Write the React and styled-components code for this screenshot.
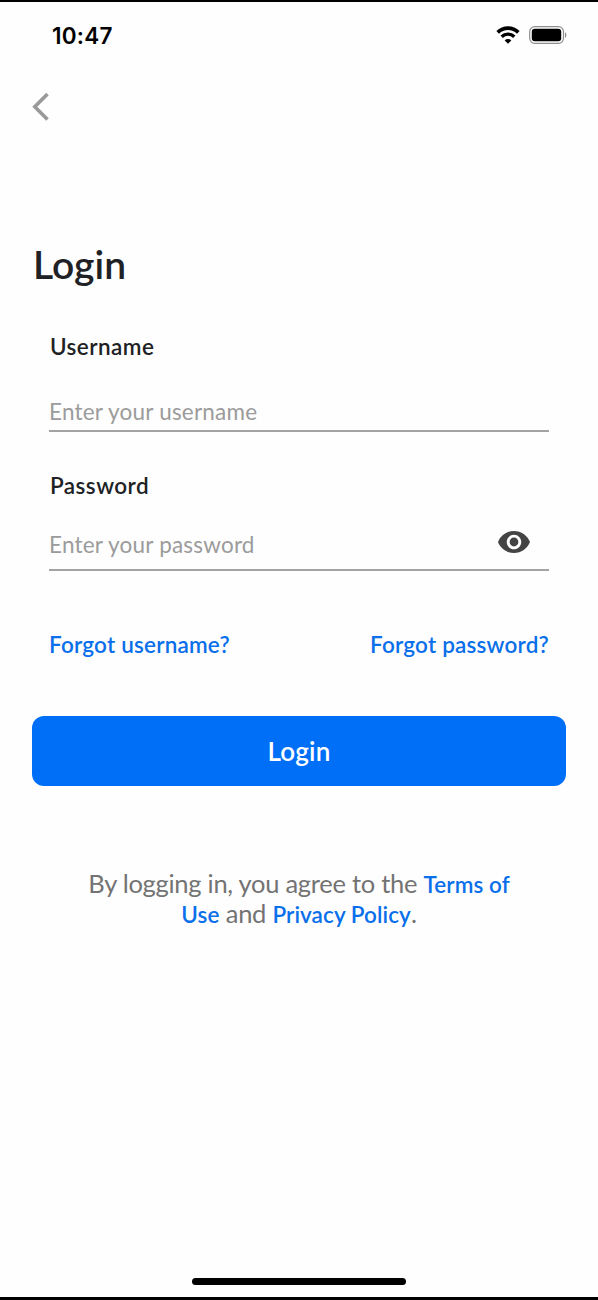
import React, { useState } from 'react';
import styled, { createGlobalStyle } from 'styled-components';

const palette = {
  primary: '#006ff8',
  link: '#0a6fea',
  text: '#202124',
  muted: '#737373',
  placeholder: '#9b9b9b',
  line: '#a3a3a3',
};

export default function App() {
  const [username, setUsername] = useState('');
  const [password, setPassword] = useState('');
  const [isVisible, setIsVisible] = useState(false);

  return (
    <>
      <GlobalStyle />
      <Screen>
        <StatusBar>
          <Time>10:47</Time>
          <StatusIcons>
            <WifiIcon />
            <BatteryIcon />
          </StatusIcons>
        </StatusBar>
        <BackButton aria-label="Back">
          <BackIcon />
        </BackButton>
        <Title>Login</Title>
        <Form>
          <Label htmlFor="username">Username</Label>
          <UsernameField>
            <Input
              id="username"
              placeholder="Enter your username"
              value={username}
              onChange={(e) => setUsername(e.target.value)}
            />
          </UsernameField>
          <Label htmlFor="password">Password</Label>
          <PasswordField>
            <Input
              id="password"
              type={isVisible ? 'text' : 'password'}
              placeholder="Enter your password"
              value={password}
              onChange={(e) => setPassword(e.target.value)}
            />
            <EyeButton
              type="button"
              aria-label="Show password"
              onClick={() => setIsVisible(!isVisible)}
            >
              <EyeIcon />
            </EyeButton>
          </PasswordField>
          <ForgotRow>
            <ForgotLink>Forgot username?</ForgotLink>
            <ForgotLink>Forgot password?</ForgotLink>
          </ForgotRow>
        </Form>
        <LoginButton>Login</LoginButton>
        <Terms>
          By logging in, you agree to the <TermsLink>Terms of</TermsLink>
          <br />
          <TermsLink>Use</TermsLink> and <TermsLink>Privacy Policy</TermsLink>.
        </Terms>
        <HomeIndicator />
      </Screen>
    </>
  );
}

function WifiIcon() {
  return (
    <svg width="24" height="18" viewBox="0 0 24 18" fill="none" stroke="#000">
      <path d="M1.7 6.300a14.800 14.800 0 0 1 20.600 0" strokeWidth="3.800" />
      <path d="M5.700 10.700a9 9 0 0 1 12.600 0" strokeWidth="3.400" />
      <path d="M12 17.700l-3.300-3.300a4.700 4.700 0 0 1 6.600 0z" fill="#000" stroke="none" />
    </svg>
  );
}

function BatteryIcon() {
  return (
    <svg width="39" height="18" viewBox="0 0 39 18" fill="none">
      <rect x="0.7" y="0.7" width="33.8" height="16.6" rx="5" stroke="#8e8e8e" strokeWidth="1.2" />
      <rect x="2.8" y="2.8" width="29.4" height="12.4" rx="3" fill="#000" />
      <path d="M36 6.2c1.800.6 1.800 5 0 5.600z" fill="#8e8e8e" />
    </svg>
  );
}

function BackIcon() {
  return (
    <svg width="18" height="30" viewBox="0 0 18 30" fill="none">
      <path d="M15.500 2L2.800 14.800L15.500 27.600" stroke="#999" strokeWidth="3.600" />
    </svg>
  );
}

function EyeIcon() {
  return (
    <svg width="32" height="22" viewBox="1 4.500 22 15" preserveAspectRatio="none" fill="#444">
      <path d="M12 4.500C7 4.500 2.730 7.610 1 12c1.730 4.390 6 7.500 11 7.500s9.270-3.110 11-7.500c-1.730-4.390-6-7.500-11-7.500zM12 17c-2.760 0-5-2.240-5-5s2.240-5 5-5 5 2.240 5 5-2.240 5-5 5zm0-8c-1.660 0-3 1.340-3 3s1.340 3 3 3 3-1.340 3-3-1.340-3-3-3z" />
    </svg>
  );
}

const GlobalStyle = createGlobalStyle`
  * {
    box-sizing: border-box;
  }
  body {
    margin: 0;
    background-color: #fefefe;
    font-family: Lato, 'Liberation Sans', sans-serif;
  }
  button,
  input {
    padding: 0;
    border: none;
    background: none;
    font-family: inherit;
  }
`;
const Screen = styled.main`
  width: 100%;
  height: 1300px;
  display: flex;
  flex-direction: column;
  border-top: 2px solid #000000;
  border-bottom: 3px solid #000000;
  background-color: #fefefe;
`;
const StatusBar = styled.header`
  height: 66px;
  padding: 0 30px 0 52px;
  display: flex;
  justify-content: space-between;
  align-items: center;
`;
const Time = styled.span`
  font-family: Inter, sans-serif;
  font-size: 22.5px;
  font-weight: 600;
  letter-spacing: 0.25px;
  color: #000000;
`;
const StatusIcons = styled.div`
  display: flex;
  align-items: center;
  gap: 9px;
`;
const BackButton = styled.button`
  width: 18px;
  height: 30px;
  margin: 24px 0 0 32px;
  & svg {
    display: block;
  }
`;
const Title = styled.h1`
  margin: 118px 0 0 33px;
  font-size: 39px;
  line-height: 48px;
  font-weight: 600;
  color: ${palette.text};
`;
const Form = styled.form`
  margin: 45px 49px 0;
  display: flex;
  flex-direction: column;
`;
const Label = styled.label`
  padding-left: 1px;
  font-size: 22.5px;
  line-height: 28px;
  font-weight: 600;
  letter-spacing: 0.45px;
  color: ${palette.text};
`;
const Field = styled.div`
  display: flex;
  align-items: flex-start;
  border-bottom: 2px solid ${palette.line};
`;
const UsernameField = styled(Field)`
  height: 34px;
  margin: 37px 0 40px;
`;
const PasswordField = styled(Field)`
  height: 40px;
  margin-top: 31px;
`;
const Input = styled.input`
  flex: 1;
  min-width: 0;
  height: 28px;
  font-size: 22.5px;
  line-height: 28px;
  letter-spacing: 0.2px;
  color: ${palette.text};
  outline: none;
  &::placeholder {
    color: ${palette.placeholder};
    opacity: 1;
  }
`;
const EyeButton = styled.button`
  height: 22px;
  margin-right: 19px;
  & svg {
    display: block;
  }
`;
const ForgotRow = styled.div`
  margin-top: 60px;
  display: flex;
  justify-content: space-between;
`;
const ForgotLink = styled.a`
  font-size: 22.5px;
  line-height: 28px;
  font-weight: 600;
  letter-spacing: 0.2px;
  color: ${palette.link};
`;
const LoginButton = styled.button`
  height: 70px;
  margin: 57px 32px 0;
  border-radius: 12px;
  background-color: ${palette.primary};
  font-size: 26px;
  font-weight: 600;
  letter-spacing: 0.2px;
  color: #ffffff;
`;
const Terms = styled.p`
  margin: 82px 0 0;
  font-size: 25.5px;
  line-height: 30px;
  letter-spacing: -0.27px;
  text-align: center;
  color: ${palette.muted};
`;
const TermsLink = styled.a`
  font-size: 22.5px;
  line-height: 1;
  font-weight: 600;
  letter-spacing: 0.08px;
  color: ${palette.link};
`;
const HomeIndicator = styled.div`
  width: 214px;
  height: 7px;
  margin: auto auto 12px;
  border-radius: 4px;
  background-color: #000000;
`;
